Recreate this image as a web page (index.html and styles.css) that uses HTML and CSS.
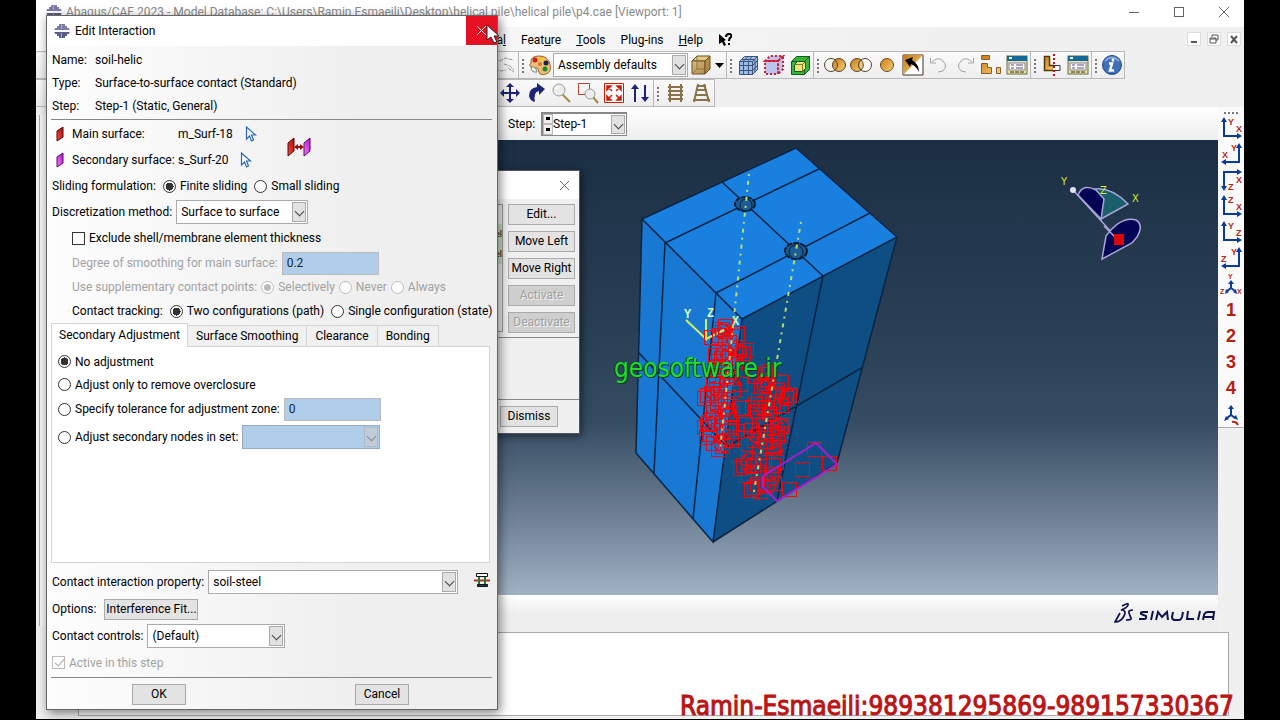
FILE: index.html
```html
<!DOCTYPE html>
<html lang="en">
<head>
    <meta charset="UTF-8">
    <meta name="viewport" content="width=device-width, initial-scale=1.0">
    <link rel="stylesheet" href="styles.css">
    <title>Abaqus/CAE 2023</title>
</head>
<body>
    <svg class="defs" width="0" height="0" aria-hidden="true">
        <defs>
            <linearGradient id="gold" x1="0" y1="0" x2="1" y2="1"><stop offset="0" stop-color="#c87a14"/><stop offset="1" stop-color="#fbd078"/></linearGradient>
            <linearGradient id="redFace" x1="0" y1="1" x2="1" y2="0"><stop offset="0" stop-color="#ff4a3c"/><stop offset="1" stop-color="#a80808"/></linearGradient>
            <linearGradient id="pinkFace" x1="0" y1="1" x2="1" y2="0"><stop offset="0" stop-color="#ff7aff"/><stop offset="1" stop-color="#b010c8"/></linearGradient>
            <linearGradient id="tan" x1="0" y1="0" x2="1" y2="1"><stop offset="0" stop-color="#d8bc80"/><stop offset="1" stop-color="#b08c50"/></linearGradient>
        </defs>
        <symbol id="logo" viewBox="0 0 16 16">
            <path d="M5 1h6v2h2v2h2v1l1 1H0l1-1V5h2V3h2z" fill="#7c7ca6"/><path d="M5 15h6v-2h2v-2h2v-1l1-1H0l1 1v1h2v2h2z" fill="#5c5c84"/><path d="M7.500 1v5M7.500 10v5" stroke="#a4a4c8"/>
        </symbol>
        <symbol id="pick" viewBox="0 0 12 17">
            <path d="M1.500 1v12l3-3 2 5 2-1-2-5h4z" fill="#f4f8fd" stroke="#2c68b4" stroke-width="1.200"/>
        </symbol>
        <symbol id="table" viewBox="0 0 22 22">
            <rect x="1" y="2" width="20" height="18" fill="#e8e4b4" stroke="#6c6840"/><rect x="1" y="2" width="20" height="5" fill="#14689c"/><path d="M3 4h3" stroke="#fff" stroke-width="2"/>
            <rect x="3" y="9" width="16" height="7" fill="#fafaff" stroke="#888"/><path d="M5 11h3M5 14h3M10 11h7M10 14h7" stroke="#557"/><path d="M4 18h4M9 18h4M14 18h4" stroke="#8c8850" stroke-width="2"/>
        </symbol>
    </svg>

    <div class="app">
        <header class="titlebar">
            <svg class="logo" width="16" height="16"><use href="#logo"/></svg>
            <span class="app-title">Abaqus/CAE 2023 - Model Database: C:\Users\Ramin Esmaeili\Desktop\helical pile\helical pile\p4.cae [Viewport: 1]</span>
            <div class="window-buttons">
                <button aria-label="Minimize"><svg width="12" height="12"><path d="M1 6.500h10"/></svg></button>
                <button aria-label="Maximize"><svg width="12" height="12"><rect x="1.500" y="1.500" width="9" height="9"/></svg></button>
                <button aria-label="Close"><svg width="12" height="12"><path d="M1 1l10 10M11 1L1 11"/></svg></button>
            </div>
        </header>

        <nav class="menubar">
            <a href="#">Specia<u>l</u></a>
            <a href="#">Feat<u>u</u>re</a>
            <a href="#"><u>T</u>ools</a>
            <a href="#">Plu<u>g</u>-ins</a>
            <a href="#"><u>H</u>elp</a>
            <svg class="whats" width="14" height="14"><path d="M1 1v10l3-2 2 4 2-1-2-4 2-1z"/><path d="M8 4q0-3 3-3t2 3q-2 1-2 4M11 10v2" fill="none" stroke="#000" stroke-width="2"/></svg>
            <div class="child-buttons">
                <button aria-label="Minimize viewport"><svg width="12" height="12"><path d="M3 9h6"/></svg></button>
                <button aria-label="Restore viewport"><svg width="12" height="12"><path class="thin" d="M4 4V2h6v5H8M2 5h6v5H2zM2 6h6"/></svg></button>
                <button aria-label="Close viewport"><svg width="12" height="12"><path d="M3 3l6 7M9 3l-6 7"/></svg></button>
            </div>
        </nav>

        <div class="toolrow">
            <div class="group first">
                <button class="tool" aria-label="Mesh"><svg width="22" height="22" fill="none" stroke="#999"><path d="M1 5l5 2 5-3 8 2M1 15l6 2 5-1M10 10l6 2 4 4M14 14l6 4M2 7l-1 4" stroke-dasharray="4 1"/></svg></button>
            </div>
            <div class="group">
                <i class="grip"></i>
                <button class="tool" aria-label="Color palette"><svg width="22" height="22"><path d="M2 9q-1-7 8-7t11 8-4 10-7-2-2-4-5-1-1-4z" fill="#f0bc7c" stroke="#9c6424"/><circle cx="6" cy="6" r="2.500" fill="#c82414"/><circle cx="12" cy="5" r="2" fill="#f4c414"/><circle cx="17" cy="9" r="2.500" fill="#142050"/><circle cx="16" cy="15" r="2.500" fill="#188c28"/><circle cx="11" cy="10" r="2" fill="#d47a20"/><path d="M2 13q5-1 6 5-6 1-6-5z" fill="#eef4dc" stroke="#788"/></svg></button>
                <span class="combo color-combo"><select aria-label="Color code"><option>Assembly defaults</option></select></span>
                <button class="tool" aria-label="Shading"><svg width="22" height="22" stroke="#6c5020"><path d="M2 7l5-5h13l-5 5z" fill="#e4c88c"/><path d="M2 7h13v13H2z" fill="url(#tan)"/><path d="M15 7l5-5v13l-5 5z" fill="#b08c50"/><path d="M7 3v12h12M7 15l-5 5" fill="none" stroke="#94743c"/></svg></button>
                <button class="arrow" aria-label="More shading"><svg width="9" height="5"><path d="M0 0h9L4.500 5z"/></svg></button>
            </div>
            <div class="group">
                <i class="grip"></i>
                <button class="tool" aria-label="Show grid"><svg width="22" height="22" fill="#9cbce8" stroke="#3c5478"><path d="M2.500 7.500l5-5h13l-5 5zM2.500 7.500h13v13h-13zM15.500 7.500l5-5v13l-5 5z"/><path d="M6.500 7.500v13M11.500 7.500v13M2.500 11.500h13l5-5M2.500 16.500h13l5-5M5 5.500h13v13M11 2.500l-5 5M15 2.500l-4 5" fill="none"/></svg></button>
                <button class="tool" aria-label="Show edges"><svg width="22" height="22" fill="#bcc4ec" stroke="#cc2038" stroke-width="2" stroke-dasharray="2 2"><path d="M2 7l5-5h13l-5 5zM2 7h13v13H2zM15 7l5-5v13l-5 5z"/></svg></button>
                <button class="tool" aria-label="Show body"><svg width="22" height="22" stroke="#145c18"><path d="M2.500 7.500l5-5h13v13l-5 5h-13z" fill="#38b43c"/><path d="M2.500 7.500h13v13M15.500 7.500l5-5" fill="none"/><path d="M5.500 10.500l3-3h8v7l-3 3h-8z" fill="#ece47c"/><path d="M5.500 10.500h8v7M13.500 10.500l3-3" fill="none" stroke="#7c7c20"/></svg></button>
            </div>
            <div class="group">
                <i class="grip"></i>
                <button class="tool" aria-label="Replace"><svg width="22" height="22" stroke="#54432c"><circle cx="15" cy="11" r="6.500" fill="url(#gold)"/><circle cx="7" cy="11" r="6.500" fill="none"/></svg></button>
                <button class="tool" aria-label="Remove"><svg width="22" height="22" stroke="#54432c"><circle cx="7" cy="11" r="6.500" fill="url(#gold)"/><circle cx="15" cy="11" r="6.500" fill="#fff"/><path d="M11 6a6.500 6.500 0 0 1 0 10 6.500 6.500 0 0 1 0-10" fill="#f0c880"/></svg></button>
                <button class="tool" aria-label="Intersect"><svg width="22" height="22"><circle cx="11" cy="11" r="6.500" fill="url(#gold)" stroke="#6b4a1c"/></svg></button>
                <button class="tool" aria-label="Replace all"><svg width="22" height="22"><path d="M1 1h20v20H1z" fill="#fff" stroke="#3c3020"/><path d="M1 1h20L1 21z" fill="url(#gold)"/><path d="M3 6l8-3-1 3q7 4 7 12-3-6-8-8l-1 3z" fill="#000"/></svg></button>
                <button class="tool" aria-label="Undo"><svg width="22" height="22" fill="none" stroke="#a4a4a4"><path d="M4 8q6-6 11-1t0 10l-5 1M2.500 4v5H8"/></svg></button>
                <button class="tool" aria-label="Redo"><svg width="22" height="22" fill="none" stroke="#a4a4a4"><path d="M18 8q-6-6-11-1t0 10l5 1M19.500 4v5H14"/></svg></button>
                <button class="tool" aria-label="Instances"><svg width="22" height="22" fill="url(#gold)" stroke="#806030"><path d="M1.500 1.500h8v4h-8zM1.500 9.500h6v4h4v6h-10zM16.500 13.500h4v6h-4z"/></svg></button>
                <button class="tool" aria-label="Display group manager"><svg width="22" height="22"><use href="#table"/></svg></button>
            </div>
            <div class="group">
                <i class="grip"></i>
                <button class="tool" aria-label="View cut"><svg width="22" height="22"><path d="M3.500 2.500h5v9h4v5h-9z" fill="url(#gold)" stroke="#503808" stroke-width="1.500"/><path d="M12 11.500h7v5h-7" fill="#fff" stroke="#333"/><path d="M13 0v22" stroke="#c80c24" stroke-width="2" stroke-dasharray="2 2"/></svg></button>
                <button class="tool" aria-label="View cut manager"><svg width="22" height="22"><use href="#table"/></svg></button>
            </div>
            <div class="group">
                <i class="grip"></i>
                <button class="tool last" aria-label="Query"><svg width="22" height="22"><circle cx="11" cy="11" r="9.500" fill="#3f70b8" stroke="#284880"/><path d="M4 7q7-7 14 0" fill="none" stroke="#84a8dc" stroke-width="2"/><path d="M12 4.500v3M8 9.500h3l-2 7h4" fill="none" stroke="#fff" stroke-width="2.500"/></svg></button>
            </div>
        </div>

        <div class="toolrow">
            <div class="group views">
                <button class="tool" aria-label="Pan"><svg width="22" height="22" fill="#1e2478"><path d="M10 4h2v6h6v2h-6v6h-2v-6H4v-2h6z"/><path d="M11 1l4 4H7zM11 21l4-4H7zM1 11l4-4v8zM21 11l-4-4v8z"/></svg></button>
                <button class="tool" aria-label="Rotate"><svg width="22" height="22" fill="#1e2478"><path d="M12 1l8 6-6 6V9q-6 1-4 11-5-1-6-6 0-8 8-9z"/></svg></button>
                <button class="tool" aria-label="Magnify"><svg width="22" height="22"><path d="M11 12l8 8" stroke="#a48844" stroke-width="2"/><circle cx="8" cy="8" r="6" fill="#ececec" stroke="#999"/><path d="M5 7l2-3" stroke="#fff" stroke-width="2"/></svg></button>
                <button class="tool" aria-label="Box zoom"><svg width="22" height="22"><path d="M1.500 1.500h11v11h-11z" fill="none" stroke="#b44030"/><path d="M16 15l5 6" stroke="#a48844" stroke-width="2"/><circle cx="13" cy="12" r="5" fill="#ececec" stroke="#999"/></svg></button>
                <button class="tool" aria-label="Auto-fit"><svg width="22" height="22" fill="#c4200c" stroke="#c4200c"><path d="M1.500 1.500h19v19h-19z" fill="#fff"/><path d="M4 4h4L4 8zM18 4v4l-4-4zM4 18v-4l4 4zM18 18h-4l4-4zM5 5l4 4M17 5l-4 4M5 17l4-4M17 17l-4-4" stroke-width="1.500"/></svg></button>
                <button class="tool" aria-label="Cycle views"><svg width="22" height="22" fill="#1e2478"><path d="M6 2l4 5H7v13H5V7H2zM16 20l4-5h-3V3h-2v12h-3z"/></svg></button>
            </div>
            <div class="group">
                <i class="grip"></i>
                <button class="tool" aria-label="Parallel projection"><svg width="22" height="22" fill="none" stroke="#887448" stroke-width="2"><path d="M6 2v18M17 2v18M4 5h15M4 9h15M4 13h15M4 17h15"/></svg></button>
                <button class="tool" aria-label="Perspective"><svg width="22" height="22" fill="none" stroke="#887448" stroke-width="2"><path d="M8 2L4 20M14 2l5 18M7 4h9M6 8h11M5 13h13M3 18h17"/></svg></button>
            </div>
        </div>

        <div class="workspace">
            <aside class="modeltree"></aside>
            <main class="canvas">
                <div class="context">
                    <label for="step">Step:</label>
                    <span class="combo step-combo"><i class="spin"><b></b><b></b></i><select id="step"><option>Step-1</option></select></span>
                </div>
                <div class="viewport">
                    <svg width="738" height="455" viewBox="480 140 738 455">
                        <path d="M796 148L642 219l100 100 155-82z" fill="#1a80e0"/>
                        <path d="M642 219l-6 234 77 89 29-223z" fill="#1878d2"/>
                        <path d="M742 319l155-82-60 226-124 79z" fill="#0f4e82"/>
                        <g class="edges">
                            <path d="M796 148L642 219l100 100 155-82zM642 219l-6 234 77 89 29-223M897 237l-60 226-124 79"/>
                            <path d="M665 243l154-74M716 293l154-80M722 182l101 94M665 243l-11 230M716 293l-23 226M823 276l-46 225M639 353l88 94 136-80"/>
                        </g>
                        <g fill="#1c5c96" stroke="#0c1c30">
                            <ellipse cx="745" cy="204" rx="10" ry="7" stroke-width="2" stroke-dasharray="5 1"/><ellipse cx="746" cy="205" rx="6" ry="6"/>
                            <ellipse cx="796" cy="251" rx="11" ry="8" stroke-width="2" stroke-dasharray="6 1"/><ellipse cx="796" cy="252" rx="7" ry="7"/>
                        </g>
                        <path d="M686 320l20 19v-20M706 339l24-12" fill="none" stroke="#d0f060" stroke-width="2"/>
                        <g class="axis"><text x="684" y="318">Y</text><text x="707" y="317">Z</text><text x="732" y="325">X</text></g>
                        <g id="contacts" class="contacts"></g>
                        <path d="M749 174L720 450M801 222L753 497" stroke="#b8dc70" stroke-width="2" stroke-dasharray="2 5 4 5"/>
                        <path d="M763 476l53-33 21 21-60 37-14-14z" fill="none" stroke="#a81cd0" stroke-width="2"/>
                        <g stroke="#a8a4d8" stroke-width="1.500">
                            <path d="M1079 195q25-16 49 9l-27 15z" fill="#1c5f6c"/>
                            <path d="M1078 195q5-12 18-5l8 9-3 20z" fill="#040454"/>
                            <path d="M1073 190l41 45"/>
                            <path d="M1106 236q15-20 30-16 8 5 1 17l-5 6-30 16z" fill="#040454"/>
                            <path d="M1104 226l14 14"/>
                        </g>
                        <circle cx="1073" cy="190" r="3" fill="#e4e4ff"/>
                        <path d="M1114 234h10v11h-10z" fill="#d80808"/>
                        <g class="triad"><text x="1061" y="185">Y</text><text x="1100" y="194">Z</text><text x="1132" y="202">X</text></g>
                    </svg>
                </div>
                <div class="prompt">
                    <svg class="simulia" width="102" height="24" fill="none" stroke="#10124e">
                        <path d="M8 4q7-4 6-1t-7 5q6 0 3 6t-9 6l5-9M19 8q-5 0-4 3t2 5-5 2" stroke-width="1.700"/>
                        <path d="M34 10h-5q-3 0-2 2l5 2q1 3-2 3h-5M39 9l-2 9M42 18l2-8 4 5 5-5 1 8M59 10l-1 5q0 3 3 3h4q2 0 3-3l1-5M74 9l-1 8h7M86 9l-2 9M89 18l1-5q1-3 4-3h6l-1 8M90 15h9" stroke-width="2"/>
                    </svg>
                </div>
            </main>
            <aside class="viewbar">
                <i class="grip wide"></i>
                <button aria-label="Front view"><svg width="22" height="24"><path d="M4 5v15h13"/><path class="tip" d="M4 1l3 5H1zM22 20l-5 3v-6z"/><text x="8" y="9">Y</text><text x="16" y="16">X</text></svg></button>
                <button aria-label="Back view"><svg width="22" height="24"><path d="M19 5v15H6"/><path class="tip" d="M19 1l3 5h-6zM1 20l5 3v-6z"/><text x="11" y="9">Y</text><text x="2" y="16">X</text></svg></button>
                <button aria-label="Top view"><svg width="22" height="24"><path d="M4 18V4h13"/><path class="tip" d="M4 23l3-5H1zM22 4l-5 3V1z"/><text x="8" y="22">Z</text><text x="16" y="15">X</text></svg></button>
                <button aria-label="Bottom view"><svg width="22" height="24"><path d="M4 5v15h13"/><path class="tip" d="M4 1l3 5H1zM22 20l-5 3v-6z"/><text x="8" y="9">Z</text><text x="16" y="16">X</text></svg></button>
                <button aria-label="Left view"><svg width="22" height="24"><path d="M4 5v15h13"/><path class="tip" d="M4 1l3 5H1zM22 20l-5 3v-6z"/><text x="8" y="9">Y</text><text x="16" y="16">Z</text></svg></button>
                <button aria-label="Right view"><svg width="22" height="24"><path d="M19 5v15H6"/><path class="tip" d="M19 1l3 5h-6zM1 20l5 3v-6z"/><text x="11" y="9">Y</text><text x="1" y="16">Z</text></svg></button>
                <button aria-label="Iso view"><svg width="22" height="24"><path d="M11 11v5l-4 3M11 16l4 3"/><path class="tip" d="M11 8l3 4H8zM5 22l1-5 3 3zM17 22l-4-2 3-3z"/><text class="small" x="8" y="7">Y</text><text class="small" x="0" y="22">Z</text><text class="small" x="17" y="22">X</text></svg></button>
                <button class="num">1</button>
                <button class="num">2</button>
                <button class="num">3</button>
                <button class="num">4</button>
                <button aria-label="Specify view"><svg width="22" height="24"><path d="M11 7v6l-4 3M11 13l4 3"/><path class="tip" d="M11 3l3 4H8zM4 19l2-5 3 3zM18 18l-5-2 3-3z"/><path class="turn" d="M12 20q4-1 6 3"/></svg></button>
            </aside>
        </div>
        <div class="messages"><div class="log"></div></div>

        <section class="manager">
            <header><button aria-label="Close manager"><svg width="11" height="11"><path d="M1 1l9 9M10 1l-9 9"/></svg></button></header>
            <div class="manager-main">
                <div class="manager-list"><p>el</p><p>el</p></div>
                <div class="manager-buttons">
                    <button class="btn">Edit...</button>
                    <button class="btn">Move Left</button>
                    <button class="btn">Move Right</button>
                    <button class="btn" disabled>Activate</button>
                    <button class="btn" disabled>Deactivate</button>
                </div>
            </div>
            <div class="manager-info"></div>
            <footer><button class="btn">Dismiss</button></footer>
        </section>

        <section class="dialog">
            <header>
                <svg width="16" height="16"><use href="#logo"/></svg>
                <h1>Edit Interaction</h1>
                <button aria-label="Close dialog"><svg width="11" height="11"><path d="M1 1l9 9M10 1l-9 9"/></svg></button>
            </header>
            <form>
                <dl>
                    <dt>Name:</dt><dd>soil-helic</dd>
                    <dt>Type:</dt><dd>Surface-to-surface contact (Standard)</dd>
                    <dt>Step:</dt><dd>Step-1 (Static, General)</dd>
                </dl>
                <hr>
                <div class="surfaces">
                    <div class="row"><svg class="face" width="8" height="16"><path d="M1 5l6-4v10l-6 4z" fill="url(#redFace)" stroke="#4c0c0c"/></svg><span class="side">Main surface:</span><span>m_Surf-18</span><button type="button" class="pick" aria-label="Edit main surface"><svg width="12" height="17"><use href="#pick"/></svg></button></div>
                    <div class="row"><svg class="face" width="8" height="16"><path d="M1 5l6-4v10l-6 4z" fill="url(#pinkFace)" stroke="#500c5c"/></svg><span class="side">Secondary surface:</span><span>s_Surf-20</span><button type="button" class="pick" aria-label="Edit secondary surface"><svg width="12" height="17"><use href="#pick"/></svg></button></div>
                    <button type="button" class="swap" aria-label="Switch surfaces"><svg width="24" height="20"><path d="M1 6l6-5v13l-6 5z" fill="url(#redFace)" stroke="#4c0c0c"/><path d="M17 6l6-5v13l-6 5z" fill="url(#pinkFace)" stroke="#500c5c"/><path d="M7 10l4-3v2h2V7l4 3-4 3v-2h-2v2z" fill="#981010"/></svg></button>
                </div>
                <div class="row spaced"><span>Sliding formulation:</span><label><input type="radio" name="sliding" checked>Finite sliding</label><label><input type="radio" name="sliding">Small sliding</label></div>
                <div class="row"><label for="method">Discretization method:</label><span class="combo method"><select id="method"><option>Surface to surface</option></select></span></div>
                <div class="row indent"><label><input type="checkbox">Exclude shell/membrane element thickness</label></div>
                <div class="row indent off low"><label for="smooth">Degree of smoothing for main surface:</label><input class="field" id="smooth" type="text" value="0.2" disabled></div>
                <div class="row indent off low"><span>Use supplementary contact points:</span><label><input type="radio" name="points" checked disabled>Selectively</label><label><input type="radio" name="points" disabled>Never</label><label><input type="radio" name="points" disabled>Always</label></div>
                <div class="row indent low spaced"><span>Contact tracking:</span><label><input type="radio" name="tracking" checked>Two configurations (path)</label><label><input type="radio" name="tracking">Single configuration (state)</label></div>

                <div class="tabs">
                    <button type="button" class="active">Secondary Adjustment</button>
                    <button type="button">Surface Smoothing</button>
                    <button type="button">Clearance</button>
                    <button type="button">Bonding</button>
                </div>
                <div class="panel">
                    <div class="row low"><label><input type="radio" name="adjust" checked>No adjustment</label></div>
                    <div class="row low"><label><input type="radio" name="adjust">Adjust only to remove overclosure</label></div>
                    <div class="row"><label><input type="radio" name="adjust">Specify tolerance for adjustment zone:</label><input class="field" type="text" value="0" aria-label="Tolerance" disabled></div>
                    <div class="row nodes"><label><input type="radio" name="adjust">Adjust secondary nodes in set:</label><span class="combo set"><select aria-label="Node set" disabled><option></option></select></span></div>
                </div>
                <div class="lower">
                    <div class="row"><label for="property">Contact interaction property:</label><span class="combo property"><select id="property"><option>soil-steel</option></select></span>
                        <button type="button" class="create" aria-label="Create property"><svg width="16" height="16"><path d="M2.500 1.500h11v3h-11z" fill="#fff" stroke="#111"/><path d="M3.500 12.500h10v2h-10z" fill="#245" stroke="#111"/><path d="M0 8.500h16" stroke="#b03028" stroke-width="2"/><path d="M5 5v7M11 5v7" stroke="#287838" stroke-width="2"/></svg></button></div>
                    <div class="row options"><span>Options:</span><button type="button" class="btn">Interference Fit...</button></div>
                    <div class="row"><label for="controls">Contact controls:</label><span class="combo controls"><select id="controls"><option>(Default)</option></select></span></div>
                    <div class="row off"><label><input type="checkbox" checked disabled>Active in this step</label></div>
                </div>
                <hr>
                <div class="actions"><button type="button" class="btn">OK</button><button type="button" class="btn">Cancel</button></div>
            </form>
        </section>

        <svg class="cursor" width="14" height="20"><path d="M1 1v15l4-3 3 6 3-1-3-6h5z" fill="#fff" stroke="#222"/></svg>
        <p class="site">geosoftware.ir</p>
        <p class="contact">Ramin-Esmaeili:989381295869-989157330367</p>
    </div>

    <script src="script.js"></script>
</body>
</html>
```
FILE: styles.css
```css
*{ box-sizing: border-box; }
body{ margin: 0; padding: 0 36px 1px; height: 100vh; background: #000; overflow: hidden; font: 12px/16px Roboto, "Open Sans", sans-serif; color: #000; }
button, input, select{ font: inherit; color: inherit; margin: 0; }
button{ padding: 0; border: 0; background: none; }
svg{ display: block; flex: none; }
p, h1, dl, dd{ margin: 0; }
.defs{ position: absolute; }
.app{ position: relative; height: 100%; display: flex; flex-direction: column; background: #f0f0f0; overflow: hidden; }

.titlebar{ display: flex; align-items: center; height: 27px; padding: 0 14px 3px 10px; background: #fff; color: #8a8a8a; }
.app-title{ margin-left: 4px; white-space: nowrap; }
.window-buttons{ display: flex; gap: 33px; margin-left: auto; }
.window-buttons svg, .manager header svg, .dialog header button svg{ fill: none; stroke: #666; }

.menubar{ display: flex; align-items: center; gap: 15px; height: 25px; margin-bottom: -1px; padding: 0 3px 0 431px; background: linear-gradient(90deg, #fff, #f0f0f0 75%); }
.menubar a{ color: #000; text-decoration: none; white-space: nowrap; }
.child-buttons{ display: flex; gap: 6px; margin: 0 0 2px auto; }
.child-buttons button{ background: #fff; border: 1px solid #ddd; }
.child-buttons svg{ fill: none; stroke: #555; stroke-width: 2; }
.child-buttons .thin{ stroke-width: 1; }

.toolrow{ display: flex; height: 28px; }
.group{ display: flex; align-items: center; border: 1px solid #b8b8b8; border-left: 0; background: linear-gradient(#fafafa, #eee); }
.first{ width: 483px; justify-content: flex-end; }
.views{ width: 618px; justify-content: flex-end; }
.tool{ width: 26px; height: 26px; padding: 2px; }
.tool.last{ width: 24px; padding: 2px 1px; }
.grip{ width: 8px; height: 15px; background: radial-gradient(circle, #777 1px, transparent 1px) 0 0 / 8px 4px; }
.grip.wide{ width: 16px; height: 6px; background-size: 4px 6px; }
.arrow{ width: 12px; padding-left: 1px; }
.combo{ position: relative; display: inline-flex; height: 24px; background: #fff; border: 1px solid #aaa; }
.combo select{ width: 100%; padding: 0 16px 0 4px; appearance: none; border: 0; background: none; outline: 0; opacity: 1; }
.combo::before{ content: ""; position: absolute; right: 1px; top: 1px; bottom: 1px; width: 12px; background: #e2e2e2; border: 1px solid #aaa; }
.combo::after{ content: ""; position: absolute; right: 4px; top: 7px; width: 6px; height: 6px; border: solid #444; border-width: 0 1px 1px 0; transform: rotate(45deg); }
.color-combo{ width: 135px; }

.workspace{ flex: 1; display: flex; min-height: 0; }
.modeltree{ width: 9px; border: solid #aaa; border-width: 0 1px; margin: 8px 2px 6px 3px; background: #f6f6f6; }
.canvas{ flex: 1; display: flex; flex-direction: column; min-width: 0; }
.context{ display: flex; align-items: center; gap: 6px; height: 33px; padding-left: 458px; background: linear-gradient(#fff, #eee); }
.step-combo{ width: 86px; border: 2px solid #888; border-right-width: 1px; border-bottom-width: 1px; }
.spin{ display: flex; flex-direction: column; width: 10px; flex: none; background: #eee; }
.spin b{ flex: 1; border: 1px solid #bbb; background: linear-gradient(#000, #000) center / 4px 3px no-repeat; }
.combo .spin + select{ padding-left: 0; }
.viewport{ flex: 1; display: flex; justify-content: flex-end; min-height: 0; overflow: hidden; background: linear-gradient(#1b2e44, #2b4157 45%, #364c63 62%, #66798d 80%, #9fb1c3); }
.edges path{ fill: none; stroke: #0a2444; stroke-width: 1.5; }
.axis{ font: bold 12px "Liberation Mono", monospace; fill: #d8ffb8; }
.triad{ font: 10px "DejaVu Sans", sans-serif; fill: #d8e830; }
.contacts{ fill: none; stroke: #f40408; }
.contacts .disk{ stroke-width: 2; stroke-dasharray: 7 2; }
.prompt{ display: flex; justify-content: flex-end; height: 37px; padding: 7px 2px 0; background: linear-gradient(#fff, #eee 50%); }

.viewbar{ width: 26px; height: 321px; display: flex; flex-direction: column; align-items: center; background: #fafafa; border-bottom: 1px solid #aaa; padding-top: 3px; overflow: hidden; }
.viewbar button{ height: 26px; flex: none; }
.viewbar svg path{ fill: none; stroke: #0b3c94; stroke-width: 2; }
.viewbar svg .tip{ fill: #0b3c94; stroke: none; }
.viewbar svg .turn{ stroke: #b42814; }
.viewbar text{ font: bold 9px/9px "Liberation Sans", sans-serif; fill: #b42814; }
.viewbar .small{ font-size: 7px; }
.viewbar .num{ font: bold 18px/26px "Liberation Sans", sans-serif; color: #b42010; }
.messages{ height: 87px; padding: 0 15px 3px 42px; }
.log{ height: 100%; background: #fff; border: 1px solid #aaa; }

.btn{ height: 21px; background: #e3e3e3; border: 1px solid #aaa; white-space: nowrap; line-height: 19px; }
.btn:disabled{ background: #cfcfcf; color: #a0a0a0; text-shadow: 1px 1px #f4f4f4; }
.manager{ position: absolute; left: 201px; top: 170px; width: 343px; height: 264px; display: flex; flex-direction: column; background: #f0f0f0; border: 1px solid #556; border-left: 0; box-shadow: 2px 2px 8px rgba(0, 0, 0, 0.5); }
.manager header{ display: flex; justify-content: flex-end; align-items: center; height: 29px; padding-right: 9px; background: #fff; }
.manager-main{ display: flex; gap: 5px; height: 139px; padding: 5px 4px; border-bottom: 1px solid #888; }
.manager-list{ flex: 1; border: 1px solid #999; text-align: right; font-size: 9px; line-height: 20px; padding-top: 19px; }
.manager-list p{ background: #c8e4c8; }
.manager-buttons{ display: flex; flex-direction: column; gap: 6px; width: 67px; flex: none; }
.manager-info{ height: 64px; border-bottom: 1px solid #888; }
.manager footer{ display: flex; justify-content: flex-end; padding: 6px 21px; }
.manager footer .btn{ width: 58px; }

.dialog{ position: absolute; left: 10px; top: 15px; width: 452px; background: linear-gradient(90deg, #fdfdfd, #efefef 70%); border: 1px solid #666; box-shadow: 2px 3px 10px rgba(0, 0, 0, 0.5); }
.dialog header{ display: flex; align-items: center; height: 30px; padding-left: 7px; background: #fff; }
.dialog h1{ margin-left: 5px; font-size: 12px; font-weight: normal; }
.dialog header button{ display: grid; place-items: center; width: 31px; height: 29px; margin: 0 0 1px auto; background: #e51123; }
.dialog header button svg{ stroke: #fff; }
.dialog form{ padding: 3px 5px 4px 4px; }
.dialog hr{ margin: 1px 0; border: 0; border-top: 1px solid #888; }
.dialog dl{ display: grid; grid-template-columns: 43px 1fr; line-height: 23px; padding-left: 1px; }
.row{ display: flex; align-items: center; height: 26px; padding-left: 1px; gap: 4px; white-space: nowrap; }
.row.spaced{ gap: 7px; }
.low{ height: 24px; }
.indent{ padding-left: 21px; }
.off{ color: #a2a2a2; }
.row label{ display: flex; align-items: center; gap: 4px; }
.surfaces{ display: grid; grid-template-columns: 236px 24px; }
.face{ margin: 0 4px; }
.side{ width: 102px; }
.pick{ margin-left: 8px; }
.swap{ grid-column: 2; grid-row: 1 / 3; align-self: center; }
input[type="radio"], input[type="checkbox"]{ appearance: none; flex: none; width: 13px; height: 13px; border: 1px solid #333; background: #fff; }
input[type="radio"]{ border-radius: 50%; }
input[type="radio"]:checked{ background: radial-gradient(circle, #333 4px, #fff 4px); }
input[type="checkbox"]:checked{ background: #fff; }
input:disabled[type]{ border-color: #bbb; }
input[type="radio"]:checked:disabled{ background: radial-gradient(circle, #bbb 3px, #fff 4px); }
input[type="checkbox"]:checked::after{ content: ""; display: block; width: 4px; height: 8px; margin: 0 0 0 4px; border: solid #aaa; border-width: 0 1px 1px 0; transform: rotate(40deg); }
.row .field{ width: 97px; height: 23px; padding: 0 4px; border: 1px solid #9ab; background: #b0ceea; color: #123; }
.method{ width: 132px; }
.property{ width: 250px; }
.controls{ width: 138px; }
.set{ width: 138px; background: #b0ceea; border-color: #9ab; }
.set::before{ background: #c0ccd8; border-color: #abc; }
.set::after{ border-color: #889; }
.create{ margin: 0 2px 4px auto; }
.tabs{ display: flex; align-items: flex-end; height: 23px; }
.tabs button{ height: 21px; padding: 0 8px; border: 1px solid #d4d4d4; border-width: 1px 1px 0 0; background: #f0f0f0; white-space: nowrap; }
.tabs .active{ height: 24px; padding: 0 7px 2px; margin-bottom: -1px; border-left-width: 1px; background: #fff; position: relative; }
.panel{ height: 217px; padding: 3px 5px; border: 1px solid #d4d4d4; background: #fff; margin-right: 2px; }
.panel .low{ height: 23px; }
.panel .nodes{ height: 30px; }
.lower{ padding: 5px 0 0; }
.lower .row{ height: 27px; }
.options .btn{ width: 94px; margin: 2px 0 0 4px; }
.actions{ display: flex; justify-content: space-between; padding: 5px 83px 0 81px; }
.actions .btn{ width: 54px; }

.cursor{ position: absolute; left: 450px; top: 24px; }
.site{ position: absolute; left: 578px; top: 353px; font: 26px/30px "DejaVu Sans Condensed", "DejaVu Sans", sans-serif; color: #20dc30; text-shadow: 1px 1px #083c10, -1px 0 #083c10; }
.contact{ position: absolute; right: 10px; bottom: 0; font: 26px/26px "DejaVu Sans Condensed", "DejaVu Sans", sans-serif; color: #c01414; -webkit-text-stroke: 1px #b81414; white-space: nowrap; }
```
FILE: script.js
```js
// contact symbols along the two piles and round the pad, [x, y] of each centre
const centres = [
    [722,329],[711,337],[725,331],[734,336],[719,335],[729,342],[743,353],[735,350],[723,352],[715,355],[729,358],[738,347],[718,361],
    [735,362],[725,366],[714,370],[722,376],[731,378],[713,383],[726,385],[720,390],[704,398],[711,393],[733,389],[717,402],[728,397],
    [740,384],[722,409],[713,412],[730,406],[704,427],[712,420],[722,422],[729,416],[718,430],[710,434],[726,431],[713,443],[722,446],
    [731,440],[736,431],[718,449],[706,437],[741,408],
    [755,376],[765,374],[772,380],[781,382],[761,386],[777,390],[768,393],[786,398],[758,400],[773,402],[752,407],[764,408],[781,405],
    [769,413],[757,411],[774,420],[763,424],[782,426],[751,430],[771,431],[758,434],[745,424],[777,436],[765,441],[754,440],[770,448],
    [759,452],[748,458],[740,468],[753,466],[764,460],[773,465],[758,472],[748,475],[768,477],[757,484],[766,486],[751,490],[774,483],
    [760,491]
];
const pad = [[789,489],[802,469],[814,449],[829,463]];
const disks = [[722,331,7],[740,352,7],[725,354,9],[729,376,7],[715,391,9],[712,421,10],[727,412,9],[723,443,9],[763,405,9],[785,395,9],[765,385,8],[780,427,9],[757,435,8],[751,463,10],[767,484,9],[776,450,6]];

const square = (x, y) => `<rect x="${x - 6.5}" y="${y - 6.5}" width="14" height="14"/>`;

document.getElementById("contacts").innerHTML =
    centres.map(([x, y], i) => square(x, y) + (i % 3 ? "" : square(x + 3, y - 3))).join("") +
    pad.map(([x, y]) => square(x, y)).join("") +
    disks.map(([x, y, r]) => `<circle class="disk" cx="${x}" cy="${y}" r="${r}"/><circle class="disk" cx="${x}" cy="${y}" r="${r / 2}"/>`).join("");
```
